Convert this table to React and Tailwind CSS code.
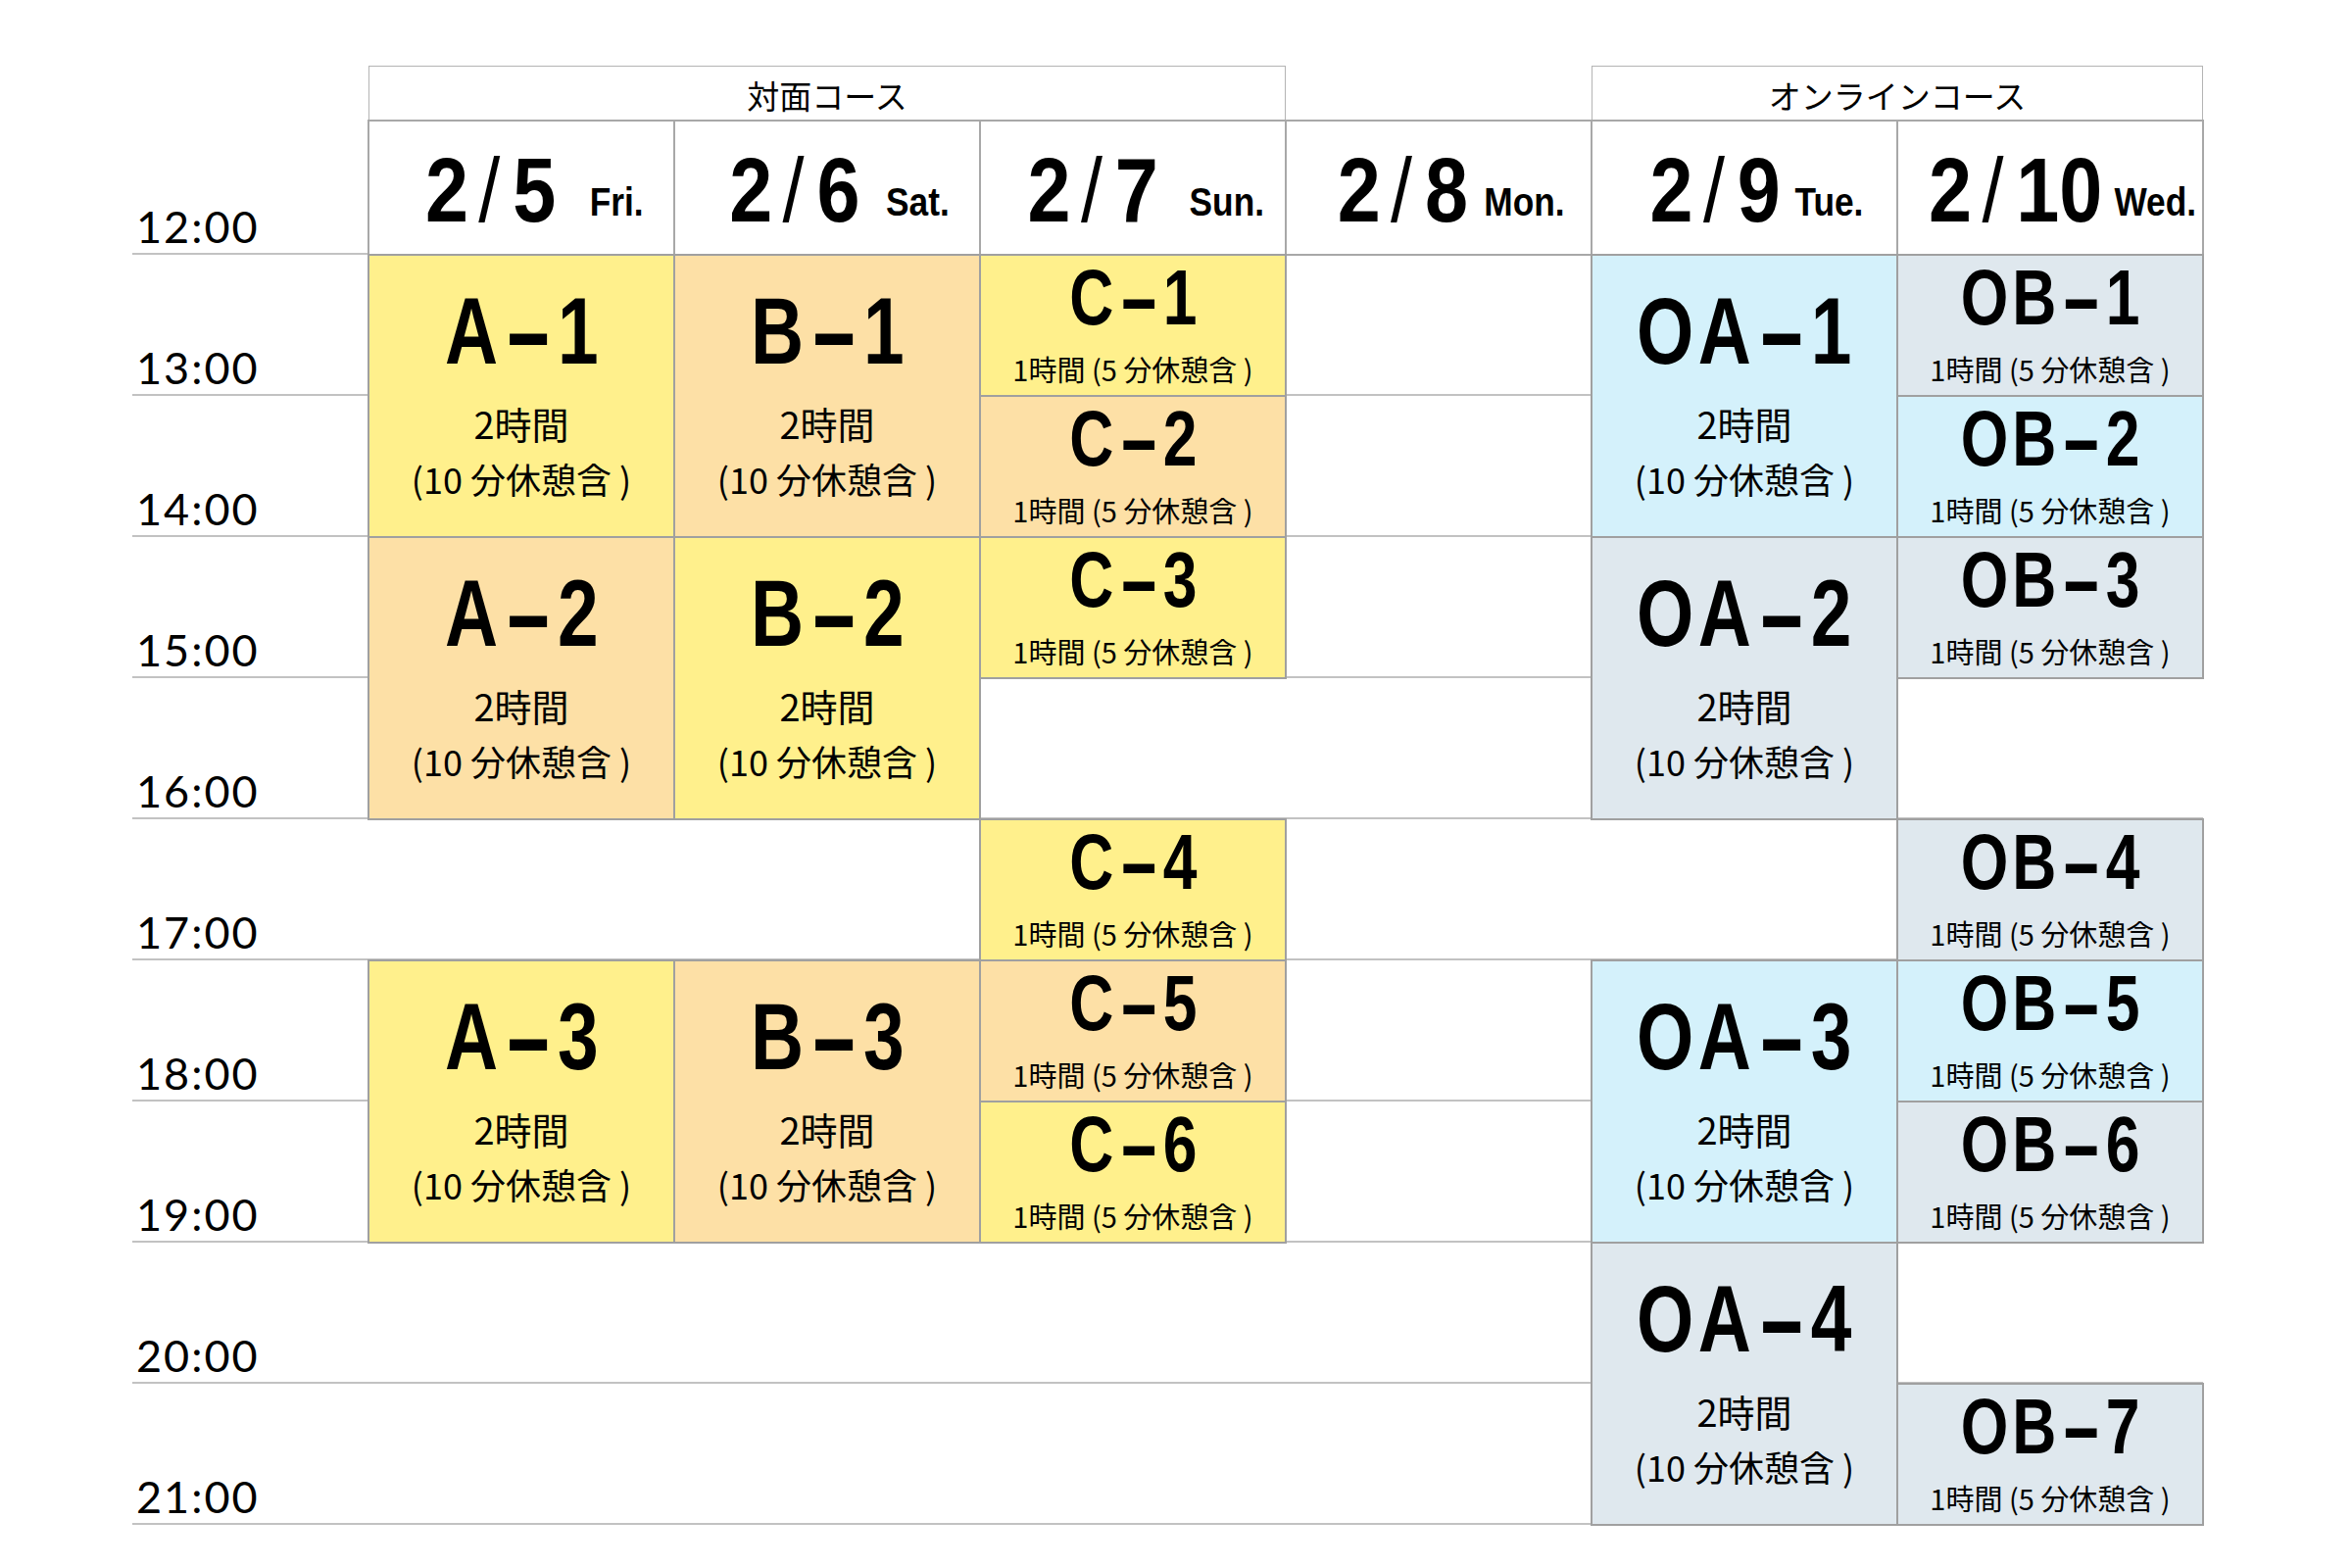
// ─── Fonts ───────────────────────────────────────────────────────────────────
// condensed look: Liberation Sans bold squeezed horizontally
const COND = "font-['Liberation_Sans',Arial,sans-serif] font-bold";
const CJK = "font-['Noto_Sans_CJK_JP',sans-serif]";

// ─── Data ────────────────────────────────────────────────────────────────────
// gap = space before the weekday, it differs a little per column in the original
const DAYS = [
  { m: "2", d: "5", dow: "Fri.", pos: "col-start-2", gap: "ml-[40px]" },
  { m: "2", d: "6", dow: "Sat.", pos: "col-start-3", gap: "ml-[31px]" },
  { m: "2", d: "7", dow: "Sun.", pos: "col-start-4", gap: "ml-[37px]" },
  { m: "2", d: "8", dow: "Mon.", pos: "col-start-5", gap: "ml-[19px]" },
  { m: "2", d: "9", dow: "Tue.", pos: "col-start-6", gap: "ml-[17px]" },
  { m: "2", d: "10", dow: "Wed.", pos: "col-start-7", gap: "ml-[14px]" },
];

const HOURS = [
  { label: "12:00", pos: "row-start-2" },
  { label: "13:00", pos: "row-start-3" },
  { label: "14:00", pos: "row-start-4" },
  { label: "15:00", pos: "row-start-5" },
  { label: "16:00", pos: "row-start-6" },
  { label: "17:00", pos: "row-start-7" },
  { label: "18:00", pos: "row-start-8" },
  { label: "19:00", pos: "row-start-9" },
  { label: "20:00", pos: "row-start-10" },
  { label: "21:00", pos: "row-start-11" },
];

const YELLOW = "bg-[#fff08c]";
const PEACH = "bg-[#fde0a6]";
const BLUE = "bg-[#d4f1fb]";
const GRAY = "bg-[#dfe8ee]";

// long = 2 hour block, short = 1 hour block
const SESSIONS = [
  { code: "A", no: "1", long: true, bg: YELLOW, pos: "col-start-2 row-start-3 row-span-2" },
  { code: "A", no: "2", long: true, bg: PEACH, pos: "col-start-2 row-start-5 row-span-2" },
  { code: "A", no: "3", long: true, bg: YELLOW, pos: "col-start-2 row-start-8 row-span-2" },
  { code: "B", no: "1", long: true, bg: PEACH, pos: "col-start-3 row-start-3 row-span-2" },
  { code: "B", no: "2", long: true, bg: YELLOW, pos: "col-start-3 row-start-5 row-span-2" },
  { code: "B", no: "3", long: true, bg: PEACH, pos: "col-start-3 row-start-8 row-span-2" },
  { code: "C", no: "1", bg: YELLOW, pos: "col-start-4 row-start-3" },
  { code: "C", no: "2", bg: PEACH, pos: "col-start-4 row-start-4" },
  { code: "C", no: "3", bg: YELLOW, pos: "col-start-4 row-start-5" },
  { code: "C", no: "4", bg: YELLOW, pos: "col-start-4 row-start-7" },
  { code: "C", no: "5", bg: PEACH, pos: "col-start-4 row-start-8" },
  { code: "C", no: "6", bg: YELLOW, pos: "col-start-4 row-start-9" },
  { code: "OA", no: "1", long: true, bg: BLUE, pos: "col-start-6 row-start-3 row-span-2" },
  { code: "OA", no: "2", long: true, bg: GRAY, pos: "col-start-6 row-start-5 row-span-2" },
  { code: "OA", no: "3", long: true, bg: BLUE, pos: "col-start-6 row-start-8 row-span-2" },
  { code: "OA", no: "4", long: true, bg: GRAY, pos: "col-start-6 row-start-10 row-span-2" },
  { code: "OB", no: "1", bg: GRAY, pos: "col-start-7 row-start-3" },
  { code: "OB", no: "2", bg: BLUE, pos: "col-start-7 row-start-4" },
  { code: "OB", no: "3", bg: GRAY, pos: "col-start-7 row-start-5" },
  { code: "OB", no: "4", bg: GRAY, pos: "col-start-7 row-start-7" },
  { code: "OB", no: "5", bg: BLUE, pos: "col-start-7 row-start-8" },
  { code: "OB", no: "6", bg: GRAY, pos: "col-start-7 row-start-9" },
  { code: "OB", no: "7", bg: GRAY, pos: "col-start-7 row-start-11" },
];

function Session({ s }) {
  return (
    <div
      className={`${s.pos} ${s.bg} flex flex-col items-center border border-[#a0a0a0] outline outline-[#a0a0a0] text-black`}
    >
      {s.long ? (
        <>
          <div className={`mt-[29px] whitespace-nowrap scale-x-[0.78] text-[96px] leading-[96px] tracking-[6px] pl-[6px] ${COND}`}>
            {s.code}
            <span className="inline-block scale-x-[2] ml-[21px] mr-[13px]">-</span>
            {s.no}
          </div>
          <div className={`mt-[17px] text-[38px] leading-[57px] ${CJK}`}>2時間</div>
          <div className={`text-[36px] leading-[57px] ${CJK}`}>(10 分休憩含 )</div>
        </>
      ) : (
        <>
          <div className={`mt-[3px] whitespace-nowrap scale-x-[0.78] text-[80px] leading-[80px] tracking-[5px] pl-[5px] ${COND}`}>
            {s.code}
            <span className="inline-block scale-x-[2] ml-[17px] mr-[11px]">-</span>
            {s.no}
          </div>
          <div className={`mt-[14px] text-[29px] leading-[36px] ${CJK}`}>1時間 (5 分休憩含 )</div>
        </>
      )}
    </div>
  );
}

export default function App() {
  return (
    <div className="w-[2400px] h-[1600px] bg-white pl-[135px] pt-[67px]">
      <div className="grid grid-cols-[241px_repeat(6,312px)] grid-rows-[56px_137px_repeat(9,144px)]">
        {/* ── hour lines + labels ── */}
        {HOURS.map((h) => (
          <div
            key={h.label}
            className={`${h.pos} col-start-1 col-end-8 border-b-2 border-[#c2c2c2] flex items-end pl-[4px] pb-[1px]`}
          >
            <span className="text-[45px] leading-[52px] tracking-[2px] text-black font-['Lato',sans-serif]">{h.label}</span>
          </div>
        ))}

        {/* ── course groups ── */}
        <div className={`row-start-1 col-start-2 col-span-3 border border-[#b4b4b4] flex items-center justify-center pt-[5px] text-[33px] ${CJK}`}>
          対面コース
        </div>
        <div className={`row-start-1 col-start-6 col-span-2 border border-[#b4b4b4] flex items-center justify-center pt-[5px] text-[33px] ${CJK}`}>
          オンラインコース
        </div>

        {/* ── dates ── */}
        {DAYS.map((d) => (
          <div
            key={d.d}
            className={`${d.pos} row-start-2 bg-white border border-[#a8a8a8] outline outline-[#a8a8a8] flex items-center justify-center pt-[4px]`}
          >
            <div className={`flex items-end shrink-0 whitespace-nowrap scale-x-[0.86] pl-[30px] ${COND}`}>
              <span className="text-[92px] leading-none">
                {d.m}
                <span className="font-normal ml-[12px] mr-[15px]">/</span>
                {d.d}
              </span>
              <span className={`text-[41px] leading-none mb-[13px] ${d.gap}`}>{d.dow}</span>
            </div>
          </div>
        ))}

        {/* ── sessions ── */}
        {SESSIONS.map((s) => (
          <Session key={s.code + s.no} s={s} />
        ))}
      </div>
    </div>
  );
}
